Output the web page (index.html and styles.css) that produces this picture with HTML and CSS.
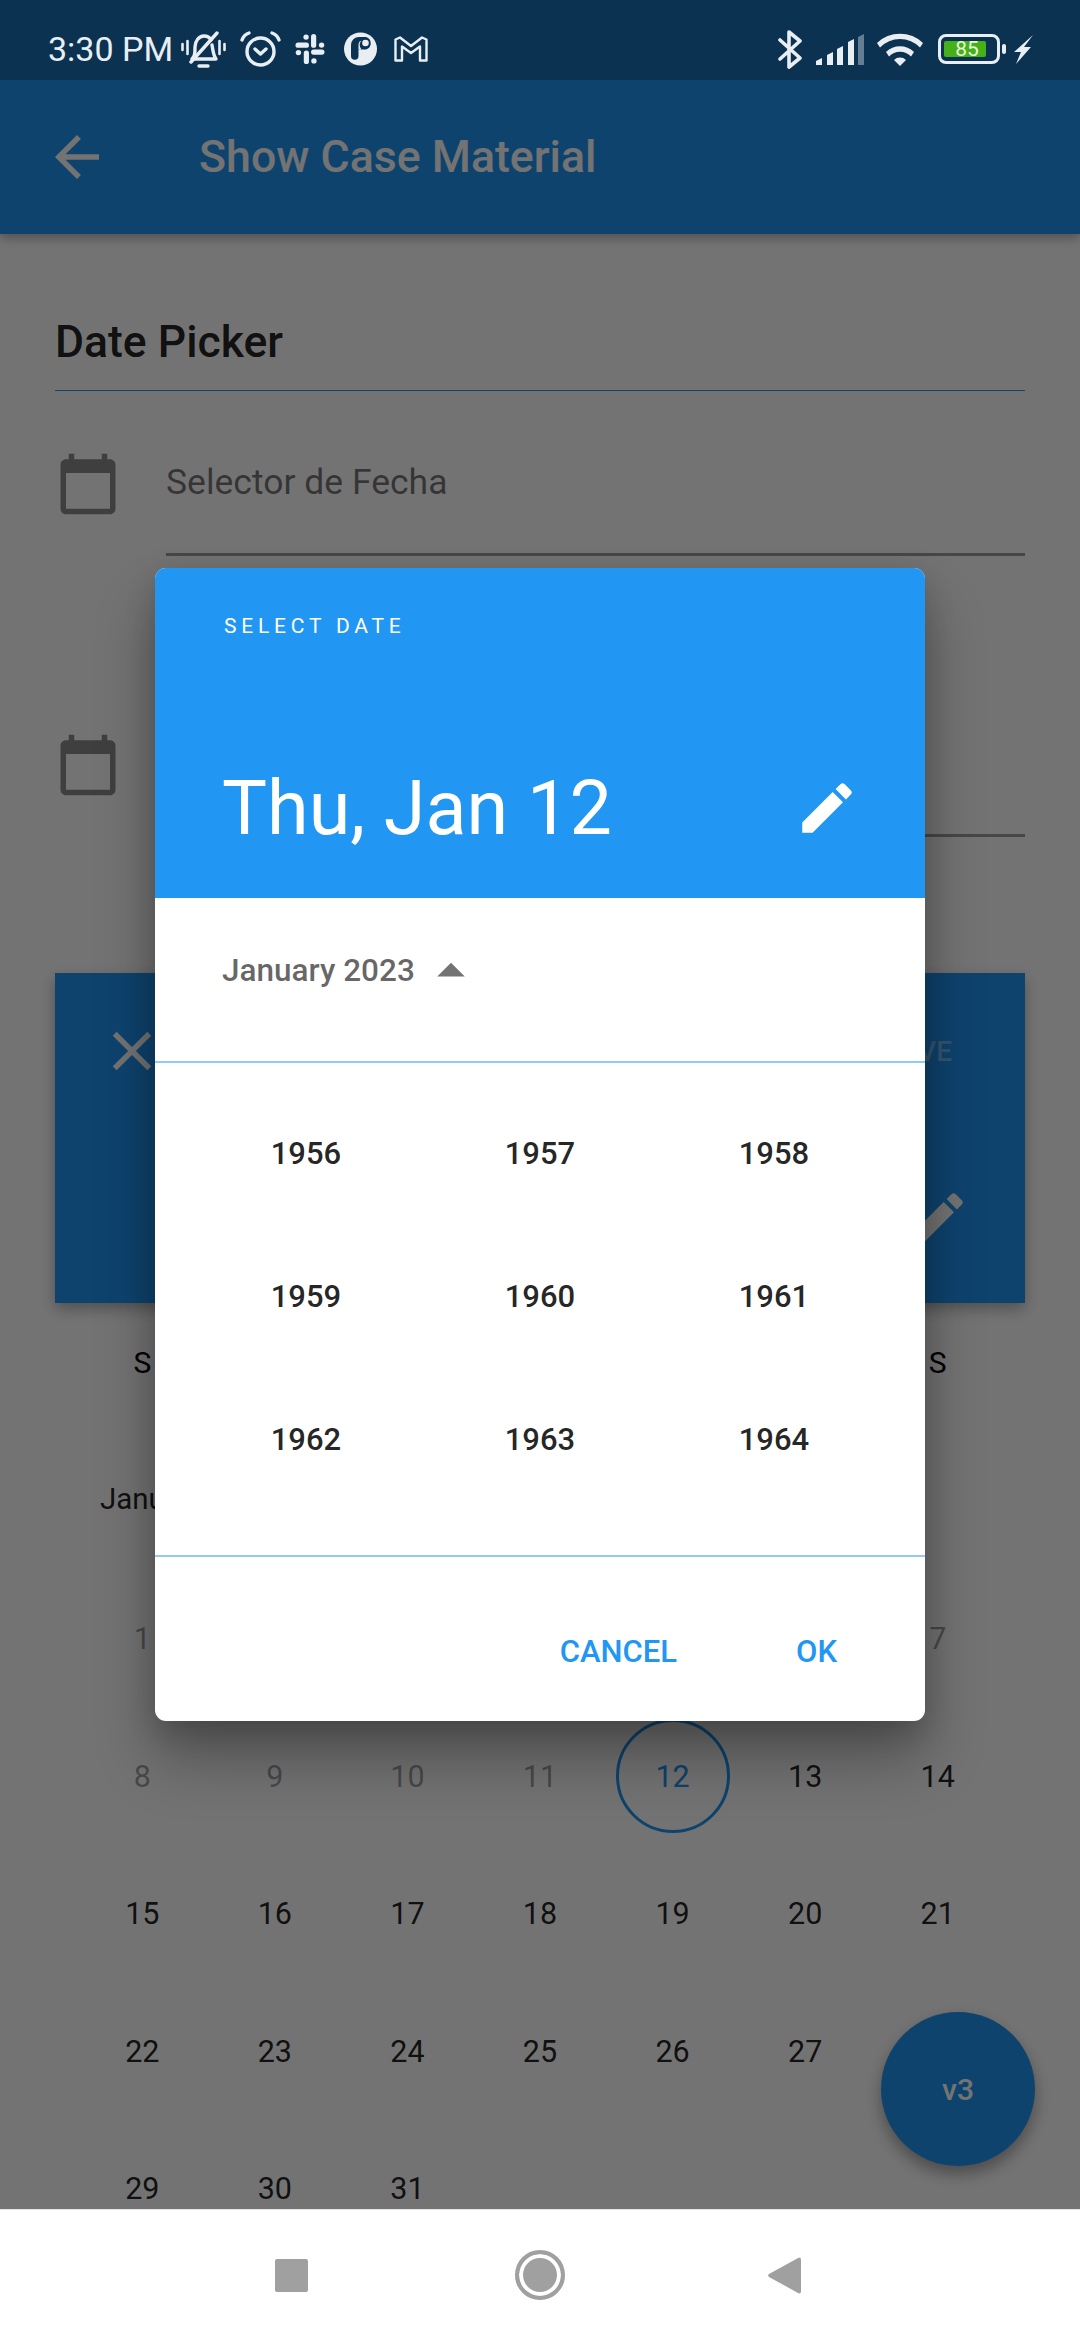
FILE: index.html
```html
<!DOCTYPE html>
<html lang="en">
<head>
    <meta charset="UTF-8">
    <meta name="viewport" content="width=device-width, initial-scale=1.0">
    <title>Show Case Material</title>
    <link rel="stylesheet" href="styles.css">
</head>
<body>
    <div class="status-bar">
        <div class="status-left">
            <span class="clock">3:30 PM</span>
            <svg class="ic-bell" viewBox="0 0 45 37" fill="none" stroke="#e9eef2" stroke-width="3.400" stroke-linecap="round" stroke-linejoin="round">
                <path d="M11 28c3-3 3-6 3-12 0-6 4-11 9-11 3 0 6 2 7 4M31 14c1 5 1 10 4 14H11"/>
                <path d="M10 31 36 2"/>
                <path d="M18 35h9"/>
                <path d="M1.500 13v6M6.500 10v13M38.500 10v13M43.500 13v6" stroke-width="2.600"/>
            </svg>
            <svg class="ic-alarm" viewBox="0 0 41 36" fill="none" stroke="#e9eef2" stroke-width="3.400" stroke-linecap="round" stroke-linejoin="round">
                <circle cx="20.500" cy="20.500" r="13.500"/>
                <path d="M15 18l5.500 5 5.500-5"/>
                <path d="M2 9c1-3 4-6 7-7M39 9c-1-3-4-6-7-7"/>
            </svg>
            <svg class="ic-slack" viewBox="0 0 28 29" fill="#e9eef2">
                <rect x="0" y="8.300" width="13" height="5" rx="2.500"/>
                <rect x="15" y="0" width="5" height="13.300" rx="2.500"/>
                <rect x="15" y="15" width="13" height="5" rx="2.500"/>
                <rect x="8" y="16" width="5" height="13" rx="2.500"/>
                <circle cx="10.200" cy="3" r="2.600"/><circle cx="25.200" cy="10.700" r="2.600"/>
                <circle cx="2.800" cy="18" r="2.600"/><circle cx="17.800" cy="26" r="2.600"/>
            </svg>
            <svg class="ic-pocket" viewBox="0 0 33 34">
                <circle cx="16.500" cy="17" r="16.500" fill="#e9eef2"/>
                <path d="M7 13a8 8 0 0 1 8-8h7a6.500 6.500 0 0 1 0 12.500h-7.500v6.500a3.750 3.750 0 0 1-7.500 0z" fill="#0c3252"/>
                <path d="M14.500 17.500V12a4 4 0 0 1 3-3.500 6.500 6.500 0 0 0 0 9z" fill="#e9eef2"/>
                <circle cx="21.500" cy="11" r="3.300" fill="#e9eef2"/>
            </svg>
            <svg class="ic-mail" viewBox="0 0 34 26" fill="none" stroke="#e9eef2" stroke-width="2.400" stroke-linejoin="round">
                <path d="M1.500 3.500 6 1.500 17 10 28 1.500 32.500 3.500V24.500H26V10.500L17 17 8 10.500V24.500H1.500z"/>
            </svg>
        </div>
        <div class="status-right">
            <svg class="ic-bt" viewBox="0 0 24 39" fill="none" stroke="#e9eef2" stroke-width="3.600" stroke-linecap="round" stroke-linejoin="round">
                <path d="M2 10 22 28 11 37V2l11 9L2 29"/>
            </svg>
            <svg class="ic-signal" viewBox="0 0 48 31" fill="#e9eef2">
                <path d="M0 31v-4l6-3v7z"/>
                <path d="M11 31V21l6-3v13z"/>
                <path d="M21 31V15l6-3v19z"/>
                <path d="M32 31V8l6-3v26z"/>
                <path d="M42 31V3l6-3v31z" opacity=".4"/>
            </svg>
            <svg class="ic-wifi" viewBox="0 0 46 34" fill="#e9eef2">
                <path d="M0 11a33 33 0 0 1 46 0l-3 4.500a28 28 0 0 0-40 0z"/>
                <path d="M9 20a20 20 0 0 1 28 0l-3 4.500a15 15 0 0 0-22 0z"/>
                <path d="M17 28a8.500 8.500 0 0 1 12 0l-6 6z"/>
            </svg>
            <div class="battery"><div class="battery-fill">85</div></div>
            <div class="battery-nub"></div>
            <svg class="ic-bolt" viewBox="0 0 19 29" fill="#e9eef2">
                <path d="M19 0 10 12h7L2 29l5-12H0z"/>
            </svg>
        </div>
    </div>

    <div class="screen">
        <header class="app-bar">
            <svg class="icon back" viewBox="0 0 24 24"><path d="M20 11H7.830l5.590-5.590L12 4l-8 8 8 8 1.410-1.410L7.830 13H20v-2z"/></svg>
            <h1>Show Case Material</h1>
        </header>

        <main class="page">
            <h2 class="section-title">Date Picker</h2>

            <div class="field">
                <svg class="icon cal" viewBox="0 0 24 24"><path d="M20 3h-1V1h-2v2H7V1H5v2H4c-1.100 0-2 .9-2 2v16c0 1.100.9 2 2 2h16c1.100 0 2-.9 2-2V5c0-1.100-.9-2-2-2zm0 18H4V8h16v13z"/></svg>
                <div class="field-input">Selector de Fecha</div>
            </div>
            <div class="field">
                <svg class="icon cal" viewBox="0 0 24 24"><path d="M20 3h-1V1h-2v2H7V1H5v2H4c-1.100 0-2 .9-2 2v16c0 1.100.9 2 2 2h16c1.100 0 2-.9 2-2V5c0-1.100-.9-2-2-2zm0 18H4V8h16v13z"/></svg>
                <div class="field-input"></div>
            </div>

            <section class="cal-head">
                <div class="cal-head-top">
                    <svg class="icon" viewBox="0 0 24 24"><path d="M19 6.410 17.590 5 12 10.590 6.410 5 5 6.410 10.590 12 5 17.590 6.410 19 12 13.410 17.590 19 19 17.590 13.410 12z"/></svg>
                    <span class="save">SAVE</span>
                </div>
                <svg class="icon cal-head-edit" viewBox="0 0 24 24"><path d="M3 17.250V21h3.750L17.810 9.940l-3.750-3.750L3 17.250zM20.710 7.040c.39-.39.39-1.020 0-1.410l-2.340-2.340c-.39-.39-1.020-.39-1.410 0l-1.830 1.830 3.750 3.750 1.830-1.830z"/></svg>
            </section>

            <div class="weekdays">
                <span>S</span><span>M</span><span>T</span><span>W</span><span>T</span><span>F</span><span>S</span>
            </div>
            <div class="month-label">January 2023</div>

            <div class="days">
                <span class="off">1</span><span class="off">2</span><span class="off">3</span><span class="off">4</span><span class="off">5</span><span class="off">6</span><span class="off">7</span>
                <span class="off">8</span><span class="off">9</span><span class="off">10</span><span class="off">11</span><span class="today"><b>12</b></span><span>13</span><span>14</span>
                <span>15</span><span>16</span><span>17</span><span>18</span><span>19</span><span>20</span><span>21</span>
                <span>22</span><span>23</span><span>24</span><span>25</span><span>26</span><span>27</span><span>28</span>
                <span>29</span><span>30</span><span>31</span>
            </div>
        </main>

        <div class="fab">v3</div>

        <div class="scrim">
            <div class="dialog">
                <div class="dialog-head">
                    <div class="dialog-label">SELECT DATE</div>
                    <div class="dialog-date">
                        <span>Thu, Jan 12</span>
                        <svg class="icon" viewBox="0 0 24 24"><path d="M3 17.250V21h3.750L17.810 9.940l-3.750-3.750L3 17.250zM20.710 7.040c.39-.39.39-1.020 0-1.410l-2.340-2.340c-.39-.39-1.020-.39-1.410 0l-1.830 1.830 3.750 3.750 1.830-1.830z"/></svg>
                    </div>
                </div>
                <div class="month-row">
                    <span>January 2023</span>
                    <svg class="icon" viewBox="0 0 24 24"><path d="M7 14l5-5 5 5z"/></svg>
                </div>
                <div class="years">
                    <span>1956</span><span>1957</span><span>1958</span>
                    <span>1959</span><span>1960</span><span>1961</span>
                    <span>1962</span><span>1963</span><span>1964</span>
                </div>
                <div class="actions">
                    <span>CANCEL</span>
                    <span>OK</span>
                </div>
            </div>
        </div>
    </div>

    <nav class="nav-bar">
        <div class="nav-square"></div>
        <div class="nav-home"></div>
        <svg class="nav-back" viewBox="0 0 33 37"><path d="M31 0.500a2 2 0 0 1 2 2v32a2 2 0 0 1-2 2L1 20a2 2 0 0 1 0-3z"/></svg>
    </nav>
</body>
</html>
```

FILE: styles.css
```css
* {
    box-sizing: border-box;
}

body {
    margin: 0;
    width: 1080px;
    height: 2340px;
    display: flex;
    flex-direction: column;
    overflow: hidden;
    font-family: Roboto, "Liberation Sans", sans-serif;
    background-color: #fff;
    color: #000;
}

.icon {
    width: 66px;
    height: 66px;
    flex: none;
    fill: currentColor;
}

/* Status bar */
.status-bar {
    height: 80px;
    flex: none;
    display: flex;
    align-items: center;
    justify-content: space-between;
    padding: 18px 47px 0 48px;
    background-color: #0c3252;
    color: #e9eef2;
}

.status-left,
.status-right {
    display: flex;
    align-items: center;
}

.clock {
    font-size: 34px;
    margin-right: 8px;
}

.ic-bell { width: 45px; height: 37px; margin-right: 14px; }
.ic-alarm { width: 41px; height: 36px; margin-right: 14px; }
.ic-slack { width: 30px; height: 30px; margin-right: 19px; }
.ic-pocket { width: 33px; height: 34px; margin-right: 17px; }
.ic-mail { width: 34px; height: 26px; }
.ic-bt { width: 24px; height: 39px; margin-right: 14px; }
.ic-signal { width: 48px; height: 31px; margin-right: 13px; }
.ic-wifi { width: 46px; height: 34px; margin-right: 15px; }
.ic-bolt { width: 19px; height: 29px; margin-left: 8px; }

.battery {
    width: 62px;
    height: 30px;
    padding: 4px 11px 4px 3px;
    border: 3px solid #e9eef2;
    border-radius: 8px;
}

.battery-fill {
    height: 100%;
    padding-left: 4px;
    background-color: #46b019;
    border-radius: 2px;
    color: #e8f5d8;
    font-size: 21px;
    line-height: 16px;
    text-align: center;
}

.battery-nub {
    width: 4px;
    height: 10px;
    margin-left: 2px;
    background-color: #e9eef2;
    border-radius: 2px;
}

/* Screen below the status bar */
.screen {
    flex: 1;
    position: relative;
    overflow: hidden;
}

.app-bar {
    height: 154px;
    display: flex;
    align-items: center;
    padding-left: 44px;
    background-color: #2196f3;
    color: #fff;
    box-shadow: 0 4px 10px rgba(0, 0, 0, 0.3);
}

.app-bar h1 {
    margin: 0 0 0 89px;
    font-size: 44.700px;
    font-weight: 500;
}

.page {
    padding: 0 55px;
}

.section-title {
    height: 157px;
    margin: 0;
    padding-bottom: 22px;
    display: flex;
    align-items: flex-end;
    font-size: 44.500px;
    font-weight: 500;
    color: rgba(0, 0, 0, 0.87);
    border-bottom: 1px solid #2196f3;
}

.field {
    height: 281px;
    display: flex;
    gap: 45px;
    padding-top: 60px;
    color: rgba(0, 0, 0, 0.45);
}

.field-input {
    flex: 1;
    height: 105px;
    padding-top: 10px;
    font-size: 35.500px;
    color: rgba(0, 0, 0, 0.54);
    border-bottom: 3px solid rgba(0, 0, 0, 0.38);
}

.cal-head {
    height: 330px;
    margin-top: 20px;
    padding: 45px 54px 52px 44px;
    display: flex;
    flex-direction: column;
    justify-content: space-between;
    background-color: #2196f3;
    color: #fff;
    box-shadow: 0 6px 14px rgba(0, 0, 0, 0.3);
}

.cal-head-top {
    display: flex;
    align-items: center;
    justify-content: space-between;
}

.save {
    margin-right: 19px;
    font-size: 28px;
    font-weight: 500;
    color: rgba(255, 255, 255, 0.38);
}

.cal-head-edit {
    align-self: flex-end;
}

.weekdays,
.days {
    display: grid;
    grid-template-columns: repeat(7, 1fr);
    margin: 0 21px;
    text-align: center;
}

.weekdays {
    height: 119px;
    align-items: center;
    font-size: 30px;
}

.month-label {
    height: 148px;
    padding: 6px 0 0 45px;
    font-size: 29.500px;
    line-height: 36px;
    color: rgba(0, 0, 0, 0.87);
    display: flex;
    align-items: center;
}

.days {
    grid-auto-rows: 137.500px;
    font-size: 30.500px;
    color: rgba(0, 0, 0, 0.87);
}

.days span {
    display: flex;
    align-items: center;
    justify-content: center;
}

.days .off {
    color: rgba(0, 0, 0, 0.38);
}

.days b {
    width: 114px;
    height: 114px;
    display: flex;
    align-items: center;
    justify-content: center;
    font-weight: 400;
    color: #2196f3;
    border: 3px solid #2196f3;
    border-radius: 50%;
}

.fab {
    position: absolute;
    right: 45px;
    bottom: 43px;
    width: 154px;
    height: 154px;
    display: flex;
    align-items: center;
    justify-content: center;
    font-size: 30px;
    font-weight: 500;
    color: #fff;
    background-color: #2196f3;
    border-radius: 50%;
    box-shadow: 0 8px 16px rgba(0, 0, 0, 0.35);
}

/* Dialog and its scrim */
.scrim {
    position: absolute;
    top: 0;
    right: 0;
    bottom: 0;
    left: 0;
    display: flex;
    align-items: center;
    justify-content: center;
    background-color: rgba(0, 0, 0, 0.55);
}

.dialog {
    width: 770px;
    height: 1153px;
    display: flex;
    flex-direction: column;
    overflow: hidden;
    background-color: #fff;
    border-radius: 11px;
    box-shadow: 0 38px 60px rgba(0, 0, 0, 0.3), 0 10px 30px rgba(0, 0, 0, 0.16);
}

.dialog-head {
    height: 330px;
    flex: none;
    padding: 44px 65px 0 67px;
    background-color: #2196f3;
    color: #fff;
}

.dialog-label {
    padding-left: 2px;
    font-size: 21px;
    line-height: 28px;
    letter-spacing: 4.800px;
}

.dialog-date {
    display: flex;
    align-items: center;
    justify-content: space-between;
    margin-top: 123px;
    font-size: 75.500px;
    line-height: 90px;
}

.month-row {
    height: 165px;
    flex: none;
    display: flex;
    align-items: flex-start;
    gap: 3px;
    padding: 53px 0 0 67px;
    font-size: 31.500px;
    font-weight: 500;
    line-height: 40px;
    color: rgba(0, 0, 0, 0.6);
    border-bottom: 2px solid #90caf9;
}

.month-row .icon {
    margin-top: -13px;
    color: rgba(0, 0, 0, 0.55);
}

.years {
    height: 494px;
    flex: none;
    display: grid;
    grid-template-columns: repeat(3, 234px);
    grid-auto-rows: 143px;
    justify-content: center;
    padding-top: 19px;
    font-size: 31px;
    font-weight: 500;
    color: rgba(0, 0, 0, 0.87);
    border-bottom: 2px solid #90caf9;
}

.years span {
    display: flex;
    align-items: center;
    justify-content: center;
}

.actions {
    flex: 1;
    display: flex;
    justify-content: flex-end;
    gap: 119px;
    padding: 75px 88px 0 0;
    font-size: 31px;
    font-weight: 500;
    line-height: 40px;
    color: #2196f3;
}

/* Navigation bar */
.nav-bar {
    height: 131px;
    flex: none;
    position: relative;
    background-color: #fff;
    border-top: 1px solid #e4e4e4;
    display: flex;
    align-items: center;
    padding-left: 275px;
}

.nav-square {
    width: 33px;
    height: 33px;
    background-color: #a0a0a0;
    border-radius: 2px;
}

.nav-home {
    width: 50px;
    height: 50px;
    margin-left: 207px;
    border: 4px solid #a0a0a0;
    border-radius: 50%;
    background-color: #a0a0a0;
    box-shadow: inset 0 0 0 4px #fff;
}

.nav-back {
    width: 33px;
    height: 37px;
    margin-left: 203px;
    fill: #a0a0a0;
}
```
